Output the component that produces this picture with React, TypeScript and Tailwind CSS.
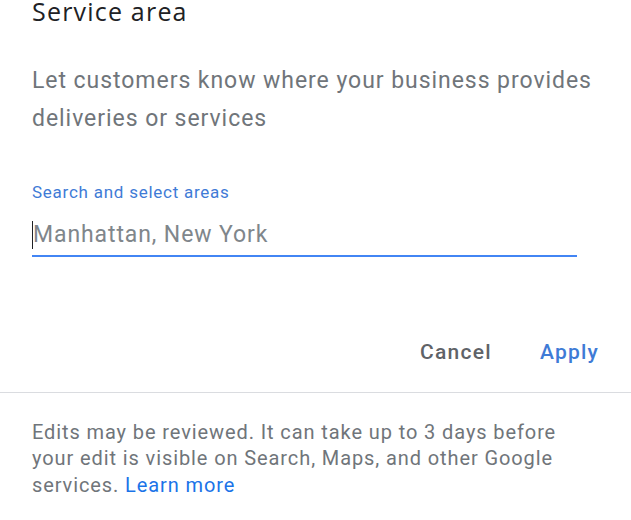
export default function App() {
  return (
    <div className="w-[631px] h-[520px] bg-white overflow-hidden font-['Roboto',sans-serif]">
      <div className="px-8">
        <h1 className="pt-[1px] text-[25px] leading-[20px] tracking-[1.2px] text-[#202124] font-['Open_Sans','Roboto',sans-serif]">
          Service area
        </h1>
        <p className="mt-[41px] w-[575px] text-[23px] leading-[38px] tracking-[0.95px] text-[#70757a]">
          Let customers know where your business provides deliveries or services
        </p>

        <div className="mt-[44px]">
          <label className="block text-[17px] leading-[20px] tracking-[0.75px] text-[#3f7bd6]">
            Search and select areas
          </label>
          <div className="mt-[19px] w-[545px] border-b-2 border-[#4285f4] pb-[6px] flex items-center">
            <span className="w-px h-[28px] bg-[#202124]" />
            <span className="text-[23px] leading-[28px] tracking-[0.9px] text-[#80868b]">
              Manhattan, New York
            </span>
          </div>
        </div>

        <div className="mt-[80px] flex justify-end gap-[48px]">
          <button className="text-[21px] font-medium tracking-[1.3px] text-[#5f6368]">Cancel</button>
          <button className="text-[21px] font-medium tracking-[1.2px] text-[#3f7bd6]">Apply</button>
        </div>
      </div>

      <div className="mt-[23px] border-t border-[#dadce0]" />

      <p className="px-8 pt-[26px] w-[600px] text-[20px] leading-[26.5px] tracking-[0.9px] text-[#70757a]">
        Edits may be reviewed. It can take up to 3 days before your edit is visible on Search, Maps, and other Google services.{" "}
        <a className="text-[#1a73e8]">Learn more</a>
      </p>
    </div>
  );
}
